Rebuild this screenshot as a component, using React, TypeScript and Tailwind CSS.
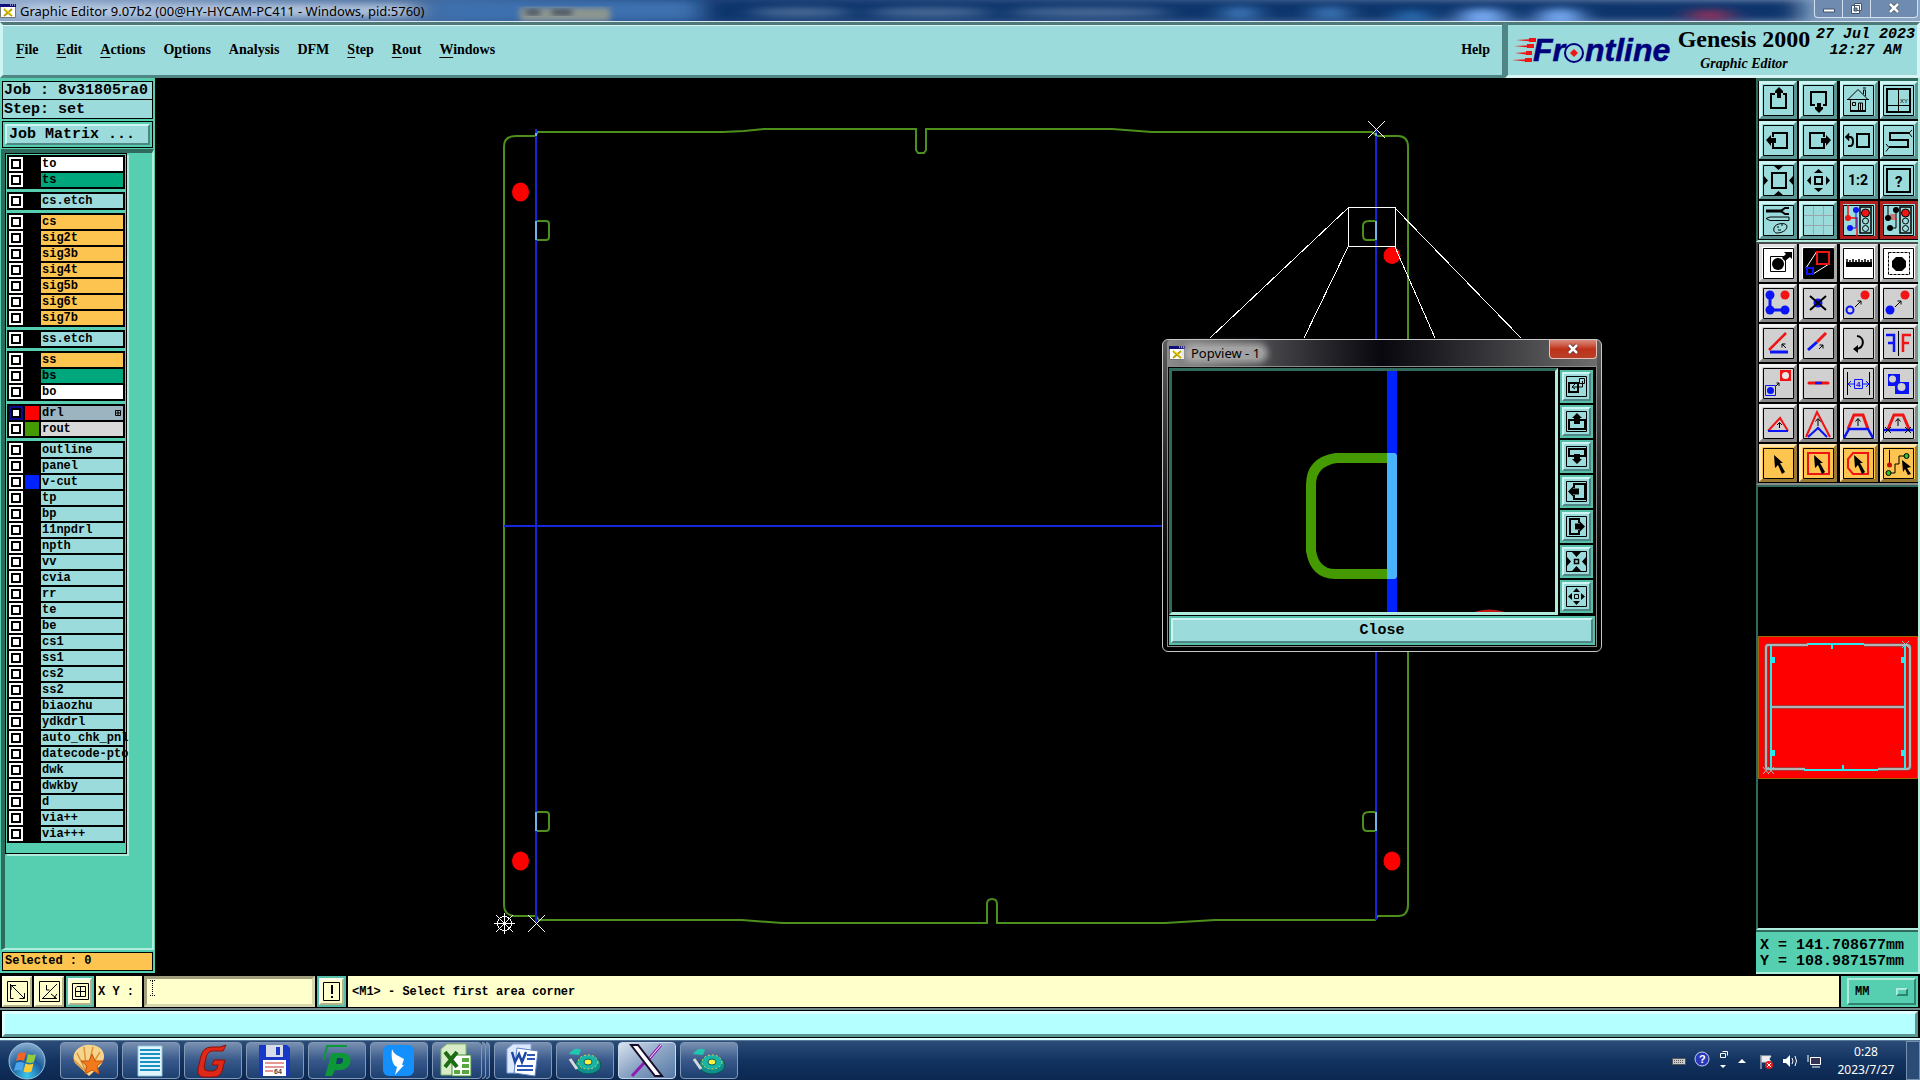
import type { ReactNode } from 'react'

const MENUS: { name: string; key?: string }[] = [
  { name: 'File', key: 'F' },
  { name: 'Edit', key: 'E' },
  { name: 'Actions', key: 'A' },
  { name: 'Options', key: 'p' },
  { name: 'Analysis' },
  { name: 'DFM' },
  { name: 'Step', key: 'S' },
  { name: 'Rout', key: 'R' },
  { name: 'Windows', key: 'W' },
]

const WHITE = 'bg-white'
const MASK = 'bg-[#00a67c]'
const MISC = 'bg-[#9cdbdb]'
const SIGNAL = 'bg-[#fdc54f]'

interface Layer {
  name: string
  bg: string
  color?: string
  active?: boolean
}

const misc = (...names: string[]): Layer[] => names.map((name) => ({ name, bg: MISC }))

// Layers are grouped the way the job matrix orders them.
const GROUPS: Layer[][] = [
  [
    { name: 'to', bg: WHITE },
    { name: 'ts', bg: MASK },
  ],
  misc('cs.etch'),
  ['cs', 'sig2t', 'sig3b', 'sig4t', 'sig5b', 'sig6t', 'sig7b'].map((name) => ({ name, bg: SIGNAL })),
  misc('ss.etch'),
  [
    { name: 'ss', bg: SIGNAL },
    { name: 'bs', bg: MASK },
    { name: 'bo', bg: WHITE },
  ],
  [
    { name: 'drl', bg: 'bg-[#9bb4bf]', color: 'bg-[#ff0000]', active: true },
    { name: 'rout', bg: 'bg-[#d9d9d9]', color: 'bg-[#449a00]' },
  ],
  [
    ...misc('outline', 'panel'),
    { name: 'v-cut', bg: MISC, color: 'bg-[#0022ff]' },
    ...misc(
      'tp', 'bp', '11npdrl', 'npth', 'vv', 'cvia', 'rr', 'te', 'be', 'cs1', 'ss1', 'cs2', 'ss2',
      'biaozhu', 'ydkdrl', 'auto_chk_pnl', 'datecode-pto', 'dwk', 'dwkby', 'd', 'via++', 'via+++',
    ),
  ],
]

const MONO = "font-['Liberation_Mono','Courier_New',monospace]"
const SERIF = "font-['Liberation_Serif','Times_New_Roman',serif]"
const SANS = "font-['Noto_Sans','Open_Sans',sans-serif]"

const RAISED = 'border-t-[#cdf5f3] border-l-[#cdf5f3] border-b-[#4f8585] border-r-[#4f8585]'
const SEA_RAISED = 'border-t-[#b0ecdc] border-l-[#b0ecdc] border-b-[#2f8470] border-r-[#2f8470]'
const SEA_SUNK = 'border-t-[#2f6a5c] border-l-[#2f6a5c] border-b-[#b0ecdc] border-r-[#b0ecdc]'

const TONES = {
  teal: 'bg-[#9cdbdb] border-t-[#cdf5f3] border-l-[#cdf5f3] border-b-[#5b9494] border-r-[#5b9494]',
  alert: 'bg-[#9cdbdb] border-[#b21f1f]',
  white: 'bg-white border-t-[#e2e2e2] border-l-[#e2e2e2] border-b-[#a8a8a8] border-r-[#a8a8a8]',
  gray: 'bg-[#d0d0d0] border-t-[#f2f2f2] border-l-[#f2f2f2] border-b-[#878787] border-r-[#878787]',
  orange: 'bg-[#fdc54f] border-t-[#ffe6ae] border-l-[#ffe6ae] border-b-[#9c7a31] border-r-[#9c7a31]',
}

interface Tool {
  label: string
  tone: keyof typeof TONES
  art: ReactNode
}

const R = '#f01414'
const B = '#0a14f5'

const VIEW_TOOLS: Tool[] = [
  {
    label: 'Pan up',
    tone: 'teal',
    art: (
      <>
        <path d="M12 9H8V23H23V9H20" fill="none" stroke="#000" strokeWidth="2" />
        <path d="M16 2l4 4v2h-2v5h-4V8h-2V6z" />
      </>
    ),
  },
  {
    label: 'Pan down',
    tone: 'teal',
    art: (
      <>
        <path d="M12 20H8V7H23V20H20" fill="none" stroke="#000" strokeWidth="2" />
        <path d="M16 28l4-4v-2h-2v-4h-4v4h-2v2z" />
      </>
    ),
  },
  {
    label: 'Home',
    tone: 'teal',
    art: (
      <g fill="none" stroke="#000">
        <path d="M5 14.500L15 4.500L25 14.500M4 14.500H26M7.500 15v11.500h15V15" />
        <path d="M7 26h16" strokeWidth="2" />
        <path d="M9.500 17.500h3v3h-3zM15.500 26v-8h4v8M17.500 18v8M20.500 9V5h2v6M20 3h3" />
      </g>
    ),
  },
  {
    label: 'Set window by XY',
    tone: 'teal',
    art: (
      <>
        <path d="M4 4h23v23H4z" fill="none" stroke="#000" strokeWidth="2" />
        <path d="M15.500 4v23M4 20.500h23" stroke="#000" />
        <text x="17" y="18" fontSize="6" fontFamily="Liberation Sans">XY</text>
      </>
    ),
  },
  {
    label: 'Pan left',
    tone: 'teal',
    art: (
      <>
        <path d="M10 12V8H24V23H10V18" fill="none" stroke="#000" strokeWidth="2" />
        <path d="M3 15l5-5v3h5v5H8v3z" />
      </>
    ),
  },
  {
    label: 'Pan right',
    tone: 'teal',
    art: (
      <>
        <path d="M21 12V8H7V23H21V18" fill="none" stroke="#000" strokeWidth="2" />
        <path d="M28 15l-5-5v3h-5v5h5v3z" />
      </>
    ),
  },
  {
    label: 'Previous view',
    tone: 'teal',
    art: (
      <g fill="none" stroke="#000" strokeWidth="2">
        <path d="M14 9h12v13H14z" />
        <path d="M4 12h3c4 0 4 9 0 9H5" />
        <path d="M6 8l-4 4l4 4z" fill="#000" strokeWidth="0.5" />
      </g>
    ),
  },
  {
    label: 'Serpentine view',
    tone: 'teal',
    art: (
      <g fill="none" stroke="#000">
        <path d="M26 8H7V15H25V22H6" strokeWidth="2" />
        <path d="M29 5l-3 3l3 4M3 19l3 3.500l-3 4" />
      </g>
    ),
  },
  {
    label: 'Zoom in',
    tone: 'teal',
    art: (
      <>
        <path d="M9 8h14v15H9z" fill="none" stroke="#000" strokeWidth="2" />
        <path d="M11 1h9l-4.500 4zM11 30h9l-4.500-4zM1 11v9l4-4.500zM30 11v9l-4-4.500z" />
      </>
    ),
  },
  {
    label: 'Zoom out',
    tone: 'teal',
    art: (
      <>
        <path d="M12 12h7v7h-7z" fill="none" stroke="#000" strokeWidth="2" />
        <path d="M11 8h9l-4.500-4zM11 23h9l-4.500 4zM8 11v9l-4-4.500zM23 11v9l4-4.500z" />
      </>
    ),
  },
  {
    label: 'Scale 1:2',
    tone: 'teal',
    art: <text x="5" y="20" fontSize="14" fontWeight="700" fontFamily="Roboto">1:2</text>,
  },
  {
    label: 'Query',
    tone: 'teal',
    art: (
      <>
        <path d="M4 4h23v23H4z" fill="none" stroke="#000" strokeWidth="2" />
        <text x="12" y="22" fontSize="15" fontWeight="700" fontFamily="Roboto">?</text>
      </>
    ),
  },
  {
    label: 'Preferences',
    tone: 'teal',
    art: (
      <g fill="none" stroke="#000">
        <path d="M3 6h16" strokeWidth="3" />
        <path d="M26 3h-4l-4 3l4 3h4" strokeWidth="2" />
        <path d="M3 13.500l4-1.500h19v3.500H7z" />
        <path d="M11 23c1-5 12-6 13-2c0 5-6 7-10 7c-2 0-4-2-3-5z" />
        <path d="M14 22h2M18 20h2M15 25h3" />
      </g>
    ),
  },
  {
    label: 'Grid',
    tone: 'teal',
    art: <path d="M10.500 1v29M20.500 1v29M1 10.500h29M1 20.500h29" stroke="#9aa5ad" />,
  },
  {
    label: 'Online checks',
    tone: 'alert',
    art: (
      <>
        <path d="M5 0v13h9v18" stroke={R} strokeWidth="1.500" fill="none" />
        <path d="M13 5v18H6" stroke={B} fill="none" />
        <circle cx="5" cy="13" r="3" fill={R} />
        <circle cx="13" cy="5" r="3" fill={B} />
        <circle cx="7" cy="23" r="3" fill={B} />
        <path d="M17 2h11v26H17z" fill="#9cdbdb" stroke="#000" strokeWidth="1.500" />
        <circle cx="22.500" cy="8" r="4" fill={R} stroke="#000" />
        <circle cx="22.500" cy="16" r="3" fill="none" stroke="#000" />
        <circle cx="22.500" cy="23.500" r="3" fill="none" stroke="#000" />
      </>
    ),
  },
  {
    label: 'Net checks',
    tone: 'alert',
    art: (
      <>
        <path d="M5 0v13h3M13 5v18H6" stroke="#000" fill="none" />
        <path d="M8 9v5h6M10 9v4M12 9v4" stroke={R} fill="none" />
        <circle cx="5" cy="13" r="3" />
        <circle cx="13" cy="5" r="3" />
        <circle cx="7" cy="23" r="3" />
        <path d="M17 2h11v26H17z" fill="#9cdbdb" stroke="#000" strokeWidth="1.500" />
        <circle cx="22.500" cy="8" r="4" fill={R} stroke="#000" />
        <circle cx="22.500" cy="16" r="3" fill="none" stroke="#000" />
        <circle cx="22.500" cy="23.500" r="3" fill="none" stroke="#000" />
      </>
    ),
  },
]

const SMALL_ARROW = 'M12 19l6-6M14.500 13H18v3.500'
const CURSOR = 'M11 7l9 8h-3l5 9l-3 2l-4-9l-3 3z'

const EDIT_TOOLS: Tool[] = [
  {
    label: 'Feature histogram',
    tone: 'white',
    art: (
      <>
        <path d="M7.500 8.500h15v15h-15z" fill="none" stroke="#000" />
        <circle cx="15" cy="16" r="6" />
        <path d="M19 10l4-4l-2-2h8v7l-2-2l-5 4z" />
      </>
    ),
  },
  {
    label: 'Popview',
    tone: 'white',
    art: (
      <>
        <path d="M1 1h29v29H1z" />
        <path d="M3 20L14 3M10 26L26 16" stroke="#fff" />
        <path d="M14 4h12v12H14z" fill="none" stroke={R} strokeWidth="2" />
        <path d="M4 20h6v6H4z" fill="none" stroke={B} strokeWidth="2" />
      </>
    ),
  },
  {
    label: 'Measure',
    tone: 'white',
    art: (
      <>
        <path d="M3 14h26v5H3z" />
        <path d="M4 11v4M7 12v3M10 11v4M13 12v3M16 11v4M19 12v3M22 11v4M25 12v3M28 11v4" stroke="#000" strokeWidth="1.500" />
      </>
    ),
  },
  {
    label: 'Highlight',
    tone: 'white',
    art: (
      <>
        <path d="M5.500 4.500h21v22h-21z" fill="none" stroke="#000" strokeDasharray="3 1" />
        <path d="M13 9h6l4 4v6l-4 4h-6l-4-4v-6z" />
      </>
    ),
  },
  {
    label: 'Add features',
    tone: 'gray',
    art: (
      <>
        <path d="M7 7v15h15" stroke={B} strokeWidth="3" fill="none" />
        <circle cx="7" cy="7" r="4.500" fill={B} />
        <circle cx="7" cy="22" r="4.500" fill={B} />
        <circle cx="22" cy="22" r="4.500" fill={B} />
        <circle cx="22" cy="7" r="4.500" fill={R} />
      </>
    ),
  },
  {
    label: 'Delete',
    tone: 'gray',
    art: (
      <>
        <circle cx="15" cy="15" r="4.500" fill={B} />
        <path d="M7 8l16 14M23 8L7 22" stroke="#000" strokeWidth="2" />
      </>
    ),
  },
  {
    label: 'Move',
    tone: 'gray',
    art: (
      <>
        <circle cx="7" cy="22" r="3.500" fill="none" stroke={B} strokeWidth="2" />
        <circle cx="22" cy="7" r="4.500" fill={R} />
        <path d={SMALL_ARROW} fill="none" stroke="#000" />
      </>
    ),
  },
  {
    label: 'Copy',
    tone: 'gray',
    art: (
      <>
        <circle cx="7" cy="22" r="4.500" fill={B} />
        <circle cx="22" cy="7" r="4.500" fill={R} />
        <path d={SMALL_ARROW} fill="none" stroke="#000" />
      </>
    ),
  },
  {
    label: 'Rotate line',
    tone: 'gray',
    art: (
      <>
        <path d="M7 24h18" stroke={B} strokeWidth="3" />
        <path d="M6 22L23 5" stroke={R} strokeWidth="2.500" />
        <path d="M23 20l-4-4M19 19.500V16h3.500" stroke="#000" fill="none" />
      </>
    ),
  },
  {
    label: 'Extend line',
    tone: 'gray',
    art: (
      <>
        <path d="M5 22l9-8" stroke={B} strokeWidth="3" />
        <path d="M14 14l9-9" stroke={R} strokeWidth="3" />
        <path d="M16 21l4-4M16.500 17H20v3.500" stroke="#000" fill="none" />
      </>
    ),
  },
  {
    label: 'Undo rotation',
    tone: 'gray',
    art: (
      <>
        <path d="M14 8c8 1 8 12-1 13" fill="none" stroke="#000" strokeWidth="2" />
        <path d="M15 17v8l-5-4z" />
      </>
    ),
  },
  {
    label: 'Mirror',
    tone: 'gray',
    art: (
      <>
        <path d="M3 7h8v17M5 15h6" fill="none" stroke={B} strokeWidth="2.500" />
        <path d="M28 7h-8v17M26 15h-6" fill="none" stroke={R} strokeWidth="2.500" />
        <path d="M15.500 3v25" stroke="#000" />
      </>
    ),
  },
  {
    label: 'Substitute',
    tone: 'gray',
    art: (
      <>
        <path d="M2.500 17.500h10v10h-10z" fill="none" stroke={B} />
        <circle cx="7.500" cy="22.500" r="3.500" fill={B} />
        <path d="M17 2h11v11H17z" fill={R} />
        <circle cx="22.500" cy="7.500" r="3.500" fill="#e8e8e8" />
        <path d="M13 18l3-3M13.500 15H16v3" fill="none" stroke="#000" />
      </>
    ),
  },
  {
    label: 'Break line',
    tone: 'gray',
    art: (
      <>
        <path d="M6 15h19" stroke={R} strokeWidth="3" strokeLinecap="round" />
        <path d="M12 15h7" stroke={B} strokeWidth="2.500" />
      </>
    ),
  },
  {
    label: 'Spacing',
    tone: 'gray',
    art: (
      <>
        <path d="M4.500 4v23M26.500 4v23" stroke="#000" />
        <path d="M5 16h6M19 16h7M8 13l-3 3l3 3M23 13l3 3l-3 3M11.500 11.500h8v9h-8z" fill="none" stroke={B} />
        <text x="13" y="19" fontSize="8" fontWeight="700" fill={B} fontFamily="Liberation Sans">4</text>
      </>
    ),
  },
  {
    label: 'Merge shapes',
    tone: 'gray',
    art: (
      <>
        <path d="M5 6h12v8h9v12H12v-8H5z" fill={B} />
        <circle cx="9.500" cy="11" r="3.500" fill="#d0d0d0" />
        <circle cx="18.500" cy="19" r="4" fill="#d0d0d0" />
      </>
    ),
  },
  {
    label: 'Triangle',
    tone: 'gray',
    art: (
      <>
        <path d="M5 23L17 10l8 13" fill="none" stroke={R} strokeWidth="2" />
        <path d="M5 23h20" stroke={B} strokeWidth="2" />
        <path d="M16.500 20v-5M14 17l2.500-2.500L19 17" fill="none" stroke="#000" />
      </>
    ),
  },
  {
    label: 'Raise peak',
    tone: 'gray',
    art: (
      <>
        <path d="M3 29L14 4l13 25" fill="none" stroke={R} strokeWidth="2" />
        <path d="M5 29l10-9l9 9" fill="none" stroke={B} strokeWidth="2" />
        <path d="M15 18v-7M12.500 13.500l2.500-3l2.500 3" fill="none" stroke="#000" />
      </>
    ),
  },
  {
    label: 'Raise segment',
    tone: 'gray',
    art: (
      <>
        <path d="M5 21L11 7h9l5 14" fill="none" stroke={R} strokeWidth="3" />
        <path d="M1 30l5-9h19l5 9" fill="none" stroke={B} strokeWidth="2.500" />
        <path d="M15 18v-7M12.500 13.500l2.500-3l2.500 3" fill="none" stroke="#000" />
      </>
    ),
  },
  {
    label: 'Cut segment',
    tone: 'gray',
    art: (
      <>
        <path d="M5 21L11 7h9l6 14" fill="none" stroke={R} strokeWidth="3" />
        <path d="M1 22h29" stroke={B} strokeWidth="2.500" />
        <path d="M15 18v-7M12.500 13.500l2.500-3l2.500 3M2 19l6 6M8 19l-6 6M22 19l6 6M28 19l-6 6" fill="none" stroke="#000" />
      </>
    ),
  },
  {
    label: 'Select',
    tone: 'orange',
    art: <path d={CURSOR} />,
  },
  {
    label: 'Select in rectangle',
    tone: 'orange',
    art: (
      <>
        <path d="M5 5h21v21H5z" fill="none" stroke={R} strokeWidth="2" />
        <path d={CURSOR} />
      </>
    ),
  },
  {
    label: 'Select in polygon',
    tone: 'orange',
    art: (
      <>
        <path d="M10 5h15v21H10l-5-6v-9z" fill="none" stroke={R} strokeWidth="2" />
        <path d={CURSOR} />
      </>
    ),
  },
  {
    label: 'Select net',
    tone: 'orange',
    art: (
      <>
        <path d="M6.500 2v15M6 25h6v-9h4V8h7" fill="none" stroke="#000" />
        <circle cx="6.500" cy="17" r="2.500" fill="#c01010" />
        <circle cx="5.500" cy="25" r="2.500" fill="#28c828" stroke="#000" />
        <circle cx="23.500" cy="8" r="2.500" fill="#28c828" stroke="#000" />
        <path d="M19 12l9 7l-4 1l4 6l-3 1l-3-6l-2 3z" />
      </>
    ),
  },
]

const POP_TOOLS: { label: string; art: ReactNode }[] = [
  {
    label: 'Link view',
    art: (
      <g fill="none" stroke="#000">
        <path d="M3 7h9v9H3z" strokeWidth="2" />
        <path d="M13.500 2.500h5v5h-5zM16.500 5v6H6M9 8l-3 3l3 2" />
      </g>
    ),
  },
  { label: 'View up', art: <><path d="M8 9H3v9h16V9h-5" fill="none" stroke="#000" strokeWidth="2" /><path d="M11 2l5 5h-2v6H8V7H6z" /></> },
  { label: 'View down', art: <><path d="M8 10H3V3h16v7h-5" fill="none" stroke="#000" strokeWidth="2" /><path d="M11 18l5-5h-2V8H8v5H6z" /></> },
  { label: 'View left', art: <><path d="M8 7V3h11v15H8v-4" fill="none" stroke="#000" strokeWidth="2" /><path d="M2 10.500l5-5v2h6v6H7v2z" /></> },
  { label: 'View right', art: <><path d="M13 7V3H4v15h9v-4" fill="none" stroke="#000" strokeWidth="2" /><path d="M19 10.500l-5-5v2H9v6h5v2z" /></> },
  {
    label: 'View zoom in',
    art: (
      <>
        <path d="M8.500 8.500h4v4h-4z" fill="none" stroke="#000" strokeWidth="1.500" />
        <path d="M6 1h9l-4.500 5zM6 20h9l-4.500-5zM1 6v9l4-4.500zM20 6v9l-4-4.500z" />
      </>
    ),
  },
  {
    label: 'View zoom out',
    art: (
      <>
        <path d="M8.500 8.500h4v4h-4z" fill="none" stroke="#000" />
        <path d="M7 6h7l-3.500-4zM7 15h7l-3.500 4zM6 7v7l-4-3.500zM15 7v7l4-3.500z" />
      </>
    ),
  },
]

function ToolButton({ label, tone, art }: Tool) {
  return (
    <button
      type="button"
      aria-label={label}
      className={`flex size-[38px] items-center justify-center border-3 ${TONES[tone]}`}
    >
      <svg viewBox="0 0 31 31" className="size-[31px] shrink-0">
        <path d="M0.500 0.500h30v30h-30z" fill="none" stroke="#000" />
        {art}
      </svg>
    </button>
  )
}

function XIcon() {
  return (
    <svg viewBox="0 0 16 16" className="size-4 shrink-0">
      <path d="M0.500 1.500h15v13h-15z" fill="#fff" stroke="#777" />
      <path d="M0 1h16v3H0z" fill="#10107a" />
      <path d="M10 2h1M12 2h1M14 2h1" stroke="#fff" />
      <path d="M4 6l8 7M12 6l-8 7" stroke="#b9a400" strokeWidth="2" />
      <path d="M5 6l7 6" stroke="#ffe600" />
    </svg>
  )
}

function TitleBar() {
  return (
    <header className="relative flex h-[22px] shrink-0 items-center justify-between overflow-hidden border-b border-[#dce6f2] bg-linear-to-r from-[#8fa9cc] via-[#1b467e] via-35% to-[#8da6c6]">
      <svg className="absolute inset-0 size-full" preserveAspectRatio="none" viewBox="0 0 1920 22">
        <defs>
          <filter id="glass" x="-20%" y="-100%" width="140%" height="300%">
            <feGaussianBlur stdDeviation="12 4" />
          </filter>
          <filter id="soft">
            <feGaussianBlur stdDeviation="3" />
          </filter>
        </defs>
        <path d="M700 0H1800V22H700z" fill="#10366c" filter="url(#glass)" />
        <path d="M430 0H700V22H430z" fill="#3e6fae" filter="url(#glass)" />
        <path d="M20 4H416V18H20z" fill="#c5d4e8" opacity="0.8" filter="url(#glass)" />
        <path d="M520 8h90v14h-90z" fill="#8c9590" filter="url(#soft)" />
        <path d="M526 10h14v6h-14zM552 10h20v6h-20z" fill="#44505e" filter="url(#soft)" />
        <g fill="#8aa4c4" opacity="0.5" filter="url(#glass)">
          <ellipse cx="800" cy="13" rx="50" ry="5" />
          <ellipse cx="930" cy="13" rx="60" ry="5" />
          <ellipse cx="1090" cy="13" rx="80" ry="5" />
        </g>
        <g filter="url(#glass)">
          <ellipse cx="1240" cy="14" rx="18" ry="8" fill="#3c78b8" />
          <ellipse cx="1330" cy="14" rx="18" ry="8" fill="#3c78b8" />
          <ellipse cx="1412" cy="18" rx="16" ry="8" fill="#2c70b4" />
          <ellipse cx="1483" cy="18" rx="24" ry="10" fill="#76a8f0" />
          <ellipse cx="1560" cy="18" rx="22" ry="10" fill="#76a8f0" />
          <ellipse cx="1710" cy="16" rx="22" ry="6" fill="#96305c" />
        </g>
      </svg>
      <div className="relative flex items-center gap-1">
        <XIcon />
        <h1 className={`${SANS} text-[13px] leading-5 text-black`}>
          Graphic Editor 9.07b2 (00@HY-HYCAM-PC411 - Windows, pid:5760)
        </h1>
      </div>
      <div className="relative mr-0.5 flex h-[18px] self-start rounded-b border border-t-0 border-[#d4e0ee] bg-[#6f8bb0]">
        <button type="button" aria-label="Minimize" className="w-7 border-r border-[#d4e0ee]">
          <svg viewBox="0 0 28 17" className="h-[17px] w-7"><path d="M8.500 9h11v3h-11z" fill="#fff" stroke="#44546c" /></svg>
        </button>
        <button type="button" aria-label="Restore" className="w-7 border-r border-[#d4e0ee]">
          <svg viewBox="0 0 28 17" className="h-[17px] w-7">
            <path d="M11.500 3.500h7v7h-7zM8.500 5.500h8v8h-8z" fill="#fff" stroke="#44546c" />
            <path d="M11 8h3v3h-3z" fill="#6f8bb0" stroke="#44546c" />
          </svg>
        </button>
        <button type="button" aria-label="Close window" className="w-[46px]">
          <svg viewBox="0 0 46 17" className="h-[17px] w-[46px]">
            <path d="M19 4l8 8M27 4l-8 8" stroke="#44546c" strokeWidth="4" />
            <path d="M19 4l8 8M27 4l-8 8" stroke="#fff" strokeWidth="2.500" />
          </svg>
        </button>
      </div>
    </header>
  )
}

function MenuBar() {
  return (
    <div className={`flex h-14 shrink-0 bg-[#9cdbdb] ${SERIF}`}>
      <nav className="flex flex-1 items-center border-3 border-t-[#4f7878] border-r-[#4f8585] border-b-[#4f8585] border-l-[#cdf5f3] pr-3 pb-0.5 pl-[13px] text-[14px] font-bold shadow-[inset_0_1px_0_#d8f4f4]">
        <ul className="flex gap-[18px]">
          {MENUS.map(({ name, key }) => {
            const at = key ? name.indexOf(key) : -1
            return (
              <li key={name}>
                <button type="button">
                  {at < 0 ? name : (
                    <>
                      {name.slice(0, at)}
                      <span className="underline underline-offset-3">{name[at]}</span>
                      {name.slice(at + 1)}
                    </>
                  )}
                </button>
              </li>
            )
          })}
        </ul>
        <button type="button" className="ml-auto">Help</button>
      </nav>
      <div className="flex w-[415px] items-start border-3 border-t-[#4f7878] border-r-[#d8f4f4] border-b-[#d8f4f4] border-l-[#4f8585] pl-1">
        <svg viewBox="0 0 162 46" className="mt-1 h-[46px] w-[162px] shrink-0">
          <g fill={R}>
            <path d="M4 11l20-1v3zM2 17l20-1v3zM3 24l16-1v3zM0 31l20-1v3z" />
            <path d="M17 9h7v4h-7zM15 15h7v4h-7zM14 22h6v4h-6zM13 29h7v4h-7z" />
          </g>
          <g fill="#00007c" stroke="#00007c" strokeWidth="0.500" fontFamily="Liberation Sans" fontWeight="700" fontStyle="italic" fontSize="32">
            <text x="21" y="32">Fr</text>
            <text x="73" y="32">ntline</text>
          </g>
          <circle cx="62" cy="24" r="9" fill="none" stroke="#00007c" strokeWidth="2" />
          <path d="M62 20l4 4l-4 4l-4-4z" fill={R} />
        </svg>
        <div className="flex w-[140px] shrink-0 flex-col items-center">
          <strong className="text-[24px] leading-7">Genesis 2000</strong>
          <em className="pt-px text-[14px] leading-5 font-bold">Graphic Editor</em>
        </div>
        <p className={`flex-1 pt-0.5 text-center text-[15px] leading-4 font-bold whitespace-nowrap italic ${MONO}`}>
          27 Jul 2023
          <br />
          12:27 AM
        </p>
      </div>
    </div>
  )
}

function LayerRow({ name, bg, color, active }: Layer) {
  return (
    <label className="flex h-4 items-center gap-0.5 pt-0.5">
      <span className={`flex size-3.5 items-center justify-center ${active ? 'bg-[#0a0a8c]' : 'bg-white'}`}>
        <input type="checkbox" className="size-2.5 appearance-none border-2 border-black bg-white" />
      </span>
      <span className={`size-3.5 ${color ?? 'bg-black'}`} />
      <span className={`flex h-3.5 w-[82px] items-center justify-between pl-px whitespace-nowrap ${bg}`}>
        {name}
        {active && (
          <svg viewBox="0 0 6 6" className="mr-0.5 size-1.5">
            <path d="M0.500 0.500h5v5h-5zM3 0v6M0 3h6" fill="none" stroke="#000" />
          </svg>
        )}
      </span>
    </label>
  )
}

function LayerPanel() {
  return (
    <aside className="mb-[3px] flex w-[155px] shrink-0 flex-col border-x border-[#55cfb0] bg-[#55cfb0] pt-[3px]">
      <div className={`mx-px text-[15px] leading-[17px] font-bold ${MONO}`}>
        <p className="border border-black bg-[#9cdbdb] pl-px whitespace-nowrap">Job : 8v31805ra0</p>
        <p className="border border-t-0 border-black bg-[#9cdbdb] pt-px pl-px">Step: set</p>
        <div className="mt-0.5 border border-black p-0.5">
          <button type="button" className={`block w-full border-2 bg-[#9cdbdb] pl-0.5 text-left ${RAISED}`}>
            Job Matrix ...
          </button>
        </div>
      </div>
      <div className={`mt-px flex-1 border-t-4 border-r-2 border-b-2 border-l-4 bg-[#55cfb0] ${SEA_SUNK}`}>
        <div className={`flex w-[122px] flex-col gap-[3px] border border-black px-px pt-px pb-2.5 text-[12px] leading-[14px] font-bold shadow-[2px_2px_0_#b0ecdc] ${MONO}`}>
          {GROUPS.map((layers) => (
            <div key={layers[0].name} className="bg-black px-0.5 pb-0.5">
              {layers.map((layer) => (
                <LayerRow key={layer.name} {...layer} />
              ))}
            </div>
          ))}
        </div>
      </div>
      <p className={`mx-px my-0.5 border border-black bg-[#fdc54f] pl-0.5 text-[12px] leading-[17px] font-bold ${MONO}`}>
        Selected : 0
      </p>
    </aside>
  )
}

// The board in window coordinates, shifted by the viewBox origin.
function BoardCanvas() {
  return (
    <svg viewBox="155 78 1601 898" className="block size-full bg-black" preserveAspectRatio="xMidYMid meet">
      <g fill="none" stroke="#4c8f1c" strokeWidth="2">
        <path d="M504 147Q504 136 516 136H535L538 132H723L744 131L764 129H916V150L918 153H924L926 150V129H1112L1152 132H1372L1377 136H1398Q1408 136 1408 147V905Q1408 916 1398 916H1378L1375 920H1215L1165 923H997V904Q997 899 992 899Q987 899 987 904V923H782L742 920H539L536 916H513Q504 914 504 905Z" />
        <path d="M536 221H546Q549 221 549 224V237Q549 240 546 240H536M536 812H546Q549 812 549 815V828Q549 831 546 831H536" />
        <path d="M1376 221H1369Q1363 221 1363 226V235Q1363 240 1367 240H1376M1376 812H1369Q1363 812 1363 817V826Q1363 831 1367 831H1376" />
      </g>
      <path d="M536 129V922M1376 129V920M504 526H1376" stroke="#1626d8" strokeWidth="2" />
      <path d="M536 221V240M536 812V831M1376 221V240M1376 812V831M536 133V136M1376 133V136" stroke="#6ab4f0" strokeWidth="2" />
      <g fill="#ff0000">
        <ellipse cx="520.500" cy="192" rx="8.500" ry="9.500" />
        <ellipse cx="520.500" cy="861" rx="8.500" ry="9.500" />
        <circle cx="1392" cy="255.500" r="8.500" />
        <ellipse cx="1392" cy="861" rx="8.500" ry="9.500" />
      </g>
      <g fill="none" stroke="#fff" shapeRendering="crispEdges">
        <path d="M1348.500 207.500H1395.500V246.500H1348.500Z" />
        <path d="M1348 208L1210 338M1348 247L1304 338M1395 247L1435 338M1395 208L1521 338" />
        <path d="M1368 121L1385 138M1385 121L1368 138M528 915L545 932M545 915L528 932" />
        <path d="M504.500 913V934M494 923.500H515M496 915L513 932M513 915L496 932" />
        <circle cx="504.500" cy="923.500" r="7" />
      </g>
    </svg>
  )
}

function Popview() {
  return (
    <section
      aria-label="Popview - 1"
      className="absolute top-[261px] left-[1007px] w-[440px] rounded-md border border-[#c8c8c8] bg-linear-to-b from-[#5c5c5c] via-[#1c1c20] via-50% to-black px-1 pb-1"
    >
      <div className="flex h-[26px] items-center gap-0.5 rounded-t bg-linear-to-r from-[#8c8c8c] via-[#08080e] via-50% to-[#6e6e6e] pl-0.5">
        <XIcon />
        <h2 className={`${SANS} rounded-full bg-[#b4b4b4]/80 px-1 text-[13px] leading-3 text-black shadow-[0_0_6px_4px_#b4b4b4cc]`}>Popview - 1</h2>
        <button
          type="button"
          aria-label="Close popview"
          className="ml-auto flex h-[19px] w-12 items-center justify-center self-start rounded-b border border-t-0 border-[#e8c0b8] bg-linear-to-b from-[#d98a7c] via-[#c03018] via-50% to-[#b84028]"
        >
          <svg viewBox="0 0 12 12" className="size-3">
            <path d="M2 2l8 8M10 2l-8 8" stroke="#5a2a2a" strokeWidth="4" />
            <path d="M2 2l8 8M10 2l-8 8" stroke="#fff" strokeWidth="2.500" />
          </svg>
        </button>
      </div>
      <div className="border border-[#8c8c8c] bg-black p-px">
        <div className="flex justify-between pr-0.5">
          <div className={`flex-1 border-3 ${SEA_SUNK}`}>
            <svg viewBox="0 0 383 241" className="block w-full bg-black">
              <path d="M215 0h10v241h-10z" fill="#0022ff" />
              <path d="M215 87H164Q139 91 139 114V180Q143 203 163 203H215" fill="none" stroke="#449a00" strokeWidth="10" />
              <path d="M215 82h8l2 2v122l-2 2h-8z" fill="#48b4ff" />
              <path d="M302 241q15-5 31 0z" fill="#c01818" />
            </svg>
          </div>
          <div className="flex flex-col gap-0.5 pt-0.5 pl-0.5">
            {POP_TOOLS.map(({ label, art }) => (
              <button
                key={label}
                type="button"
                aria-label={label}
                className={`flex size-[33px] items-center justify-center border-4 bg-[#9cdbdb] outline-2 -outline-offset-2 outline-[#55bfa8] ${RAISED}`}
              >
                <svg viewBox="0 0 21 21" className="size-[21px] shrink-0">
                  <path d="M0.500 0.500h20v20h-20z" fill="none" stroke="#000" />
                  {art}
                </svg>
              </button>
            ))}
          </div>
        </div>
        <div className="mt-px border-2 border-[#55bfa8]">
          <button type="button" className={`block w-full border-2 bg-[#9cdbdb] text-[15px] leading-[21px] font-bold ${MONO} ${RAISED}`}>
            Close
          </button>
        </div>
      </div>
    </section>
  )
}

function Navigator() {
  return (
    <svg viewBox="0 0 160 143" className="block w-full">
      <path d="M0.500 0.500h159v142h-159z" fill="#ff0000" stroke="#a06a00" />
      <g fill="none" stroke="#4c7474" strokeWidth="3">
        <path d="M50 9H10Q8 9 8 12V130Q8 133 10 133H47M106 9H149Q152 9 152 12V130Q152 133 149 133H120M13 71H147" />
      </g>
      <g fill="none" stroke="#b4b4b4" strokeWidth="2">
        <path d="M50 9H10Q8 9 8 12V130Q8 133 10 133H47M106 9H149Q152 9 152 12V130Q152 133 149 133H120M13 71H147" />
      </g>
      <g fill="none" stroke="#28e8f0" strokeWidth="2">
        <path d="M49 8H106M46 134H120M13 9V133M147 9V133M74 8v5M85 134v-5" />
        <path d="M14 22h2v4h-2zM14 115h2v4h-2zM144 22h2v4h-2zM144 115h2v4h-2z" />
      </g>
      <path d="M144 5l7 7M151 5l-7 7M5 131l6 7M11 131l-6 7M10 131l6 7M16 131l-6 7" stroke="#9cc8cc" />
    </svg>
  )
}

function ToolPanel() {
  return (
    <aside className="mb-0.5 flex w-[164px] shrink-0 flex-col border-r-2 border-r-[#b0ecdc] bg-black">
      <div className="border-t-3 border-b-2 border-l-2 border-t-[#2f6a5c] border-b-[#b0ecdc] border-l-[#2f6a5c] pl-px">
        <div className="grid grid-cols-4 gap-0.5 pb-px">
          {VIEW_TOOLS.map((t) => <ToolButton key={t.label} {...t} />)}
        </div>
      </div>
      <div className="border-t-2 border-b-2 border-l-2 border-[#4c4c4c] border-b-[#8c8c8c] pl-px">
        <div className="grid grid-cols-4 gap-0.5 pb-px">
          {EDIT_TOOLS.map((t) => <ToolButton key={t.label} {...t} />)}
        </div>
      </div>
      <div className="flex flex-1 flex-col justify-center border-2 border-r-0 border-t-[#2f6a5c] border-b-[#b0ecdc] border-l-[#2f6a5c]">
        <Navigator />
      </div>
      <p className={`border-t-2 border-b-2 border-t-[#2f6a5c] border-b-[#b0ecdc] bg-[#55cfb0] pt-1.5 pb-0.5 pl-1 text-[15px] leading-4 font-bold whitespace-nowrap ${MONO}`}>
        X = 141.708677mm
        <br />
        Y = 108.987157mm
      </p>
    </aside>
  )
}

const CREAM = 'bg-[#ffffcc] border-t-[#fffff0] border-l-[#fffff0] border-b-[#b4b48c] border-r-[#b4b48c]'

function CommandRow() {
  return (
    <div className={`flex h-8 shrink-0 gap-0.5 bg-black px-0.5 pb-px text-[12px] font-bold ${MONO}`}>
      <button type="button" aria-label="Snap to corner" className={`flex w-[30px] items-center justify-center border-2 ${CREAM}`}>
        <svg viewBox="0 0 21 21" className="size-[21px]" fill="none" stroke="#000">
          <path d="M0.500 0.500h20v20h-20zM3.500 3v14.500h3M4 4l13 13M4 9V4.500h5M17.500 12v5.500h-5" />
        </svg>
      </button>
      <button type="button" aria-label="Angle snap" className={`flex w-[30px] items-center justify-center border-2 ${CREAM}`}>
        <svg viewBox="0 0 21 21" className="size-[21px]" fill="none" stroke="#000">
          <path d="M0.500 0.500h20v20h-20zM3 17.500h15M4 17L18 3M7.500 4v5h3M12 13l5 4M18 13l-3 4" />
        </svg>
      </button>
      <button type="button" aria-label="Grid snap" className={`flex w-7 items-center justify-center border-4 outline-2 -outline-offset-2 outline-[#55bfa8] ${CREAM}`}>
        <svg viewBox="0 0 17 17" className="size-[17px] shrink-0" fill="none" stroke="#000">
          <path d="M0.500 0.500h16v16h-16zM8.500 3v11M3 8.500h11M5 3.500h8.500v10h-10V5z" />
        </svg>
      </button>
      <label htmlFor="xy" className="flex w-[46px] items-center bg-[#ffffcc] pl-0.5 whitespace-nowrap">X Y :</label>
      <div className="relative w-[171px]">
        <input id="xy" type="text" className="size-full border-3 border-t-[#a0a080] border-r-[#d8d8b0] border-b-[#d8d8b0] border-l-[#a0a080] bg-[#ffffcc] px-1" />
        <svg viewBox="0 0 5 16" className="pointer-events-none absolute top-1 left-1.5 h-4 w-[5px]" stroke="#000" strokeDasharray="1 1">
          <path d="M0 0.500h5M2.500 1v14M0 15.500h5" />
        </svg>
      </div>
      <button type="button" aria-label="Warnings" className={`flex w-[29px] items-center justify-center border-4 outline-2 -outline-offset-2 outline-[#55bfa8] ${CREAM}`}>
        <svg viewBox="0 0 17 19" className="h-[19px] w-[17px] shrink-0">
          <path d="M0.500 0.500h16v18h-16z" fill="none" stroke="#000" />
          <path d="M8 3h2v9H8zM8 14h2v2H8z" />
        </svg>
      </button>
      <p className="flex flex-1 items-center bg-[#ffffcc] pl-1">&lt;M1&gt; - Select first area corner</p>
      <div className="relative w-[77px] bg-[#55cfb0] py-0.5 pr-0.5 pl-1.5">
        <select aria-label="Units" className={`size-full appearance-none border-2 pl-1.5 ${SEA_RAISED}`}>
          <option>MM</option>
        </select>
        <span className={`pointer-events-none absolute top-3 right-2.5 h-2 w-3 border-2 ${SEA_RAISED}`} />
      </div>
    </div>
  )
}

const GUIDE_ART = (
  <>
    <ellipse cx="21" cy="22" rx="13" ry="9" fill="#10908c" stroke="#0a5454" />
    <ellipse cx="21" cy="19" rx="10" ry="7" fill="#18b4a8" stroke="#e0d050" strokeDasharray="2 2" />
    <ellipse cx="21" cy="19" rx="4" ry="3" fill="#fff040" stroke="#086060" />
    <path d="M2 11q6-8 12-4l-2 5z" fill="#20c8b0" />
    <path d="M3 16l7 10" stroke="#d8d8d8" strokeWidth="3" />
  </>
)

const APPS: { label: string; active?: boolean; stacked?: boolean; art: ReactNode }[] = [
  {
    label: 'Shell',
    art: (
      <>
        <path d="M4 20C-2 8 12 0 20 2C32 2 38 14 28 24L18 33z" fill="#f6d48c" />
        <path d="M16 30L6 10M16 30L13 4M16 30L22 4M16 30L29 9M16 30L3 17" stroke="#d8963c" strokeWidth="1.500" />
        <path d="M21 11l3 7h8l-6 5l2 8l-7-4l-7 4l2-8l-6-5h8z" fill="#f07a1c" stroke="#c85410" />
      </>
    ),
  },
  {
    label: 'Notepad',
    art: (
      <>
        <path d="M5 3h24v30H5z" fill="#e2f6fc" stroke="#8cc8e0" />
        <path d="M7 7h20M7 11h20M7 15h20M7 19h20M7 23h20M7 27h20" stroke="#1c90c0" strokeWidth="2" />
      </>
    ),
  },
  {
    label: 'Genesis',
    art: <path d="M31 2L28 8H17Q12 9 11 15L9 24Q9 28 13 28H18Q21 28 22 25L23 22H17L19 17H30L27 28Q25 34 18 34H9Q2 34 3 26L6 13Q8 4 17 4H25z" fill="#e02818" stroke="#8c1008" />,
  },
  {
    label: 'Total Commander',
    art: (
      <>
        <path d="M2 2h28l3 3v28H2z" fill="#1838c8" />
        <path d="M9 2h17v12H9z" fill="#d8dce8" />
        <path d="M19 4h4v8h-4z" fill="#1838c8" />
        <path d="M6 17h23v16H6z" fill="#fff" />
        <path d="M8 20h19M8 24h19M8 28h8" stroke="#c83030" />
        <text x="17" y="31" fontSize="7" fontWeight="700" fontFamily="Liberation Sans" fill="#444">64</text>
      </>
    ),
  },
  {
    label: 'PCB tool',
    art: (
      <>
        <path d="M5 17L8 3h20" fill="none" stroke="#0c9838" strokeWidth="2" />
        <path d="M12 10h12c12 1 9 18-4 17h-4l-3 6H6l5-17z" fill="#0c9838" />
        <path d="M18 15h5c2 1 1 6-2 6h-4z" fill="#16406c" />
      </>
    ),
  },
  {
    label: 'DingTalk',
    art: (
      <>
        <rect x="2" y="2" width="31" height="31" rx="6" fill="#1490fc" />
        <path d="M11 6c2 6 7 7 12 10l-2 6h2l-9 10l2-8c-5-2-6-10-5-18z" fill="#fff" />
      </>
    ),
  },
  {
    label: 'Excel',
    stacked: true,
    art: (
      <>
        <path d="M2 6l6-5h19v31H2z" fill="#d8ecc8" stroke="#88b868" />
        <path d="M13 12h19v21H13z" fill="#fff" stroke="#3c8c2c" />
        <path d="M23 15h7v4h-7zM23 21h7v4h-7zM15 27h6v4h-6zM23 27h7v4h-7z" fill="#58a840" />
        <path d="M6 9l12 15M18 9L6 24" stroke="#1c6c14" strokeWidth="4" />
      </>
    ),
  },
  {
    label: 'Word',
    art: (
      <>
        <path d="M2 6l6-5h18v29H2z" fill="#dce8fc" stroke="#8ca8dc" />
        <path d="M12 5l21 3l-3 25l-21-3z" fill="#fff" stroke="#5c80c4" />
        <path d="M22 12h8M22 16h8M12 23h16M12 27h16" stroke="#2c58b4" strokeWidth="2" />
        <path d="M7 9l3 10l4-8l3 8l4-10" fill="none" stroke="#1c48a4" strokeWidth="2.500" />
      </>
    ),
  },
  { label: 'CAM guide', art: GUIDE_ART },
  {
    label: 'X server',
    active: true,
    art: (
      <>
        <path d="M32 2L20 16M15 20L3 33" stroke="#8c1cb4" strokeWidth="3" />
        <path d="M32 2L20 16" stroke="#fff" />
        <path d="M2 2h7l24 31h-7z" fill="#fff" stroke="#180c2c" strokeWidth="2" />
      </>
    ),
  },
  { label: 'CAM guide 2', art: GUIDE_ART },
]

const TASK = 'border-[#8298b4] bg-linear-to-b from-[#7890b0] via-[#38588a] to-[#1c4070]'

function Taskbar() {
  return (
    <footer className="flex h-10 shrink-0 items-stretch border-t border-[#5c7898] bg-linear-to-b from-[#2c4c78] via-[#123260] to-[#0c2850] text-white">
      <button type="button" aria-label="Start" className="flex w-[60px] items-center pl-[7px]">
        <svg viewBox="0 0 40 40" className="size-10">
          <defs>
            <radialGradient id="orb" cx="50%" cy="90%" r="90%">
              <stop offset="0" stopColor="#3cc8f0" />
              <stop offset="0.5" stopColor="#1c5c9c" />
              <stop offset="1" stopColor="#8cb0d0" />
            </radialGradient>
          </defs>
          <circle cx="20" cy="20" r="18" fill="url(#orb)" stroke="#9cc4e0" />
          <path d="M11 13q4-3 8-1l-2 8q-4-2-8 0z" fill="#f06428" />
          <path d="M21 13q4 2 8 0l-2 8q-4 2-8 0z" fill="#90cc3c" />
          <path d="M9 22q4-2 8 0l-2 8q-4-2-8 0z" fill="#4ca4ec" />
          <path d="M18.500 22.500q4 2 8 0l-2 8q-4 2-8 0z" fill="#fccc34" />
        </svg>
      </button>
      <div className="flex gap-1 py-px">
        {APPS.map(({ label, active, stacked, art }) => (
          <div key={label} className="flex w-[58px]">
            <button
              type="button"
              aria-label={label}
              className={`flex flex-1 items-center justify-center rounded-sm border ${
                active ? 'border-[#c8d8e8] bg-linear-to-br from-[#d8e4f0] via-[#8ca4c4] to-[#5478a4]' : TASK
              }`}
            >
              <svg viewBox="0 0 36 36" className="size-9">{art}</svg>
            </button>
            {stacked && (
              <>
                <span className={`w-1 rounded-r-sm border border-l-0 ${TASK}`} />
                <span className={`w-1 rounded-r-sm border border-l-0 ${TASK}`} />
              </>
            )}
          </div>
        ))}
      </div>
      <div className="ml-auto flex items-center">
        <svg viewBox="0 0 160 24" className="h-6 w-40">
          <path d="M6.500 9.500h13v6h-13z" fill="#ccc" stroke="#555" />
          <path d="M8 11.500h10M8 13.500h10" stroke="#555" strokeDasharray="1 1" />
          <circle cx="36" cy="10" r="7" fill="#2838b8" stroke="#c8d0f0" />
          <text x="33" y="14" fontSize="11" fontWeight="700" fill="#fff" fontFamily="Liberation Sans">?</text>
          <path d="M54.500 4.500h5v4h-5zM56.500 2.500h5v4" fill="none" stroke="#fff" />
          <path d="M54 16h6l-3 3zM72 14h8l-4-4z" fill="#fff" />
          <path d="M95 6v14M96 7h9l-2 3l2 3h-9z" fill="#eee" stroke="#ddd" />
          <circle cx="103" cy="16" r="4" fill="#e02020" />
          <path d="M101 14l4 4M105 14l-4 4" stroke="#fff" />
          <path d="M117 10h3l4-4v12l-4-4h-3z" fill="#fff" />
          <path d="M126 9q2 3 0 6M129 7q3 5 0 10" fill="none" stroke="#fff" />
          <path d="M144.500 8.500h10v7h-10zM146 18h8M142 6v7" fill="#335" stroke="#fff" />
        </svg>
        <time className={`w-20 text-center text-[12px] leading-[18px] ${SANS}`}>
          0:28
          <br />
          2023/7/27
        </time>
      </div>
      <button type="button" aria-label="Show desktop" className="w-3.5 border border-[#7890b0] bg-[#2c4c78]" />
    </footer>
  )
}

export default function App() {
  return (
    <div className="flex h-screen flex-col overflow-hidden bg-black text-black">
      <TitleBar />
      <MenuBar />
      <main className="flex min-h-0 flex-1">
        <LayerPanel />
        <div className="relative min-w-0 flex-1">
          <BoardCanvas />
          <Popview />
        </div>
        <ToolPanel />
      </main>
      <CommandRow />
      <div className="h-8 shrink-0 border-t-2 border-b-2 border-t-[#708888] border-b-[#dcffff] bg-black">
        <div className="mx-0.5 mt-px h-[26px] border-3 border-t-[#dcffff] border-r-[#5c9494] border-b-[#5c9494] border-l-[#dcffff] bg-[#b4ffff]" />
      </div>
      <Taskbar />
    </div>
  )
}
